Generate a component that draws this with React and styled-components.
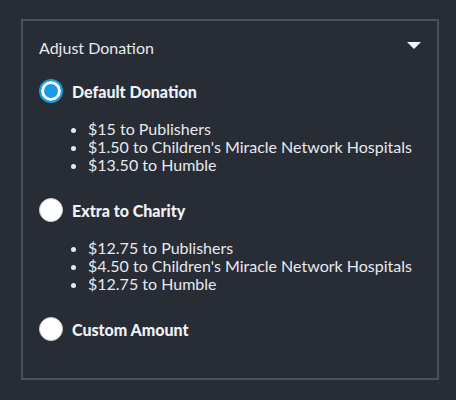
import React, { useState } from "react";
import styled, { createGlobalStyle } from "styled-components";

const GlobalStyle = createGlobalStyle`
  html, body {
    margin: 0;
    background: #282c34;
  }
  body {
    font-family: Lato, "Open Sans", sans-serif;
    color: #e9ecf2;
  }
`;

const options = [
  {
    id: "default",
    label: "Default Donation",
    items: [
      "$15 to Publishers",
      "$1.50 to Children's Miracle Network Hospitals",
      "$13.50 to Humble",
    ],
  },
  {
    id: "extra",
    label: "Extra to Charity",
    items: [
      "$12.75 to Publishers",
      "$4.50 to Children's Miracle Network Hospitals",
      "$12.75 to Humble",
    ],
  },
  { id: "custom", label: "Custom Amount", items: [] },
];

function App() {
  const [selected, setSelected] = useState("default");
  return (
    <Page>
      <GlobalStyle />
      <Panel>
        <Header>
          <Title>Adjust Donation</Title>
          <Caret viewBox="0 0 14 8">
            <path d="M0 0 H14 L7 7 Z" fill="#f1f4f8" />
          </Caret>
        </Header>
        {options.map((opt) => (
          <Option key={opt.id}>
            <RadioRow onClick={() => setSelected(opt.id)}>
              <Radio checked={selected === opt.id} />
              <Label>{opt.label}</Label>
            </RadioRow>
            {opt.items.length > 0 && (
              <Split>
                {opt.items.map((item) => (
                  <li key={item}>{item}</li>
                ))}
              </Split>
            )}
          </Option>
        ))}
      </Panel>
    </Page>
  );
}

export default App;

const Page = styled.div`
  width: 456px;
  height: 400px;
  padding: 19px 0 0 21px;
  box-sizing: border-box;
`;

const Panel = styled.div`
  width: 418px;
  height: 361px;
  box-sizing: border-box;
  border: 2px solid #4b505d;
  padding: 15px 16px 0 16px;
`;

const Header = styled.div`
  display: flex;
  align-items: center;
  justify-content: space-between;
  height: 22px;
  margin-bottom: 20px;
`;

const Title = styled.div`
  font-size: 16px;
  color: #e6e9ef;
`;

const Caret = styled.svg`
  width: 14px;
  height: 8px;
  margin-top: -3px;
`;

const Option = styled.div`
  margin-bottom: 23px;
`;

const RadioRow = styled.div`
  display: flex;
  align-items: center;
  gap: 9px;
  height: 26px;
  cursor: pointer;
`;

const Radio = styled.span`
  width: 24px;
  height: 24px;
  box-sizing: border-box;
  border-radius: 50%;
  flex: none;
  background: ${(p) => (p.checked ? "#1a9be3" : "#ffffff")};
  border: ${(p) => (p.checked ? "2px solid #1a9be3" : "1px solid #c9ccd2")};
  box-shadow: ${(p) => (p.checked ? "inset 0 0 0 3px #ffffff" : "none")};
`;

const Label = styled.span`
  font-size: 16px;
  font-weight: 900;
  color: #eef1f5;
`;

const Split = styled.ul`
  margin: 16px 0 0 0;
  padding: 0 0 0 49px;
  font-size: 16px;
  line-height: 18px;
  color: #e6e9ef;
`;
